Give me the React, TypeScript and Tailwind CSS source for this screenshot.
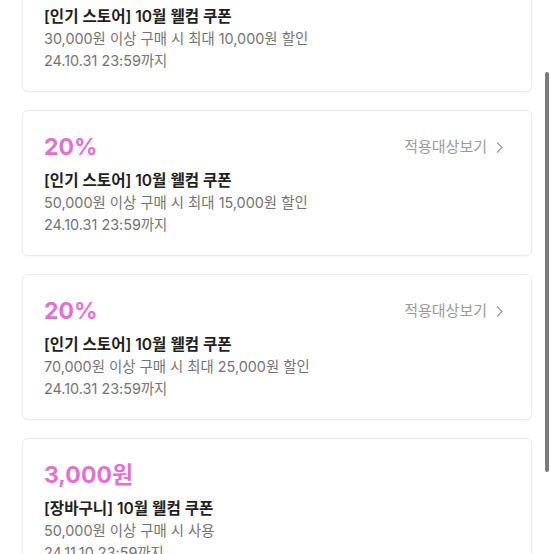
import React from "react";

type Coupon = {
  amount?: string;
  title: string;
  condition: string;
  until: string;
  showTarget?: boolean;
};

const COUPONS: Coupon[] = [
  {
    amount: "20%",
    title: "[인기 스토어] 10월 웰컴 쿠폰",
    condition: "30,000원 이상 구매 시 최대 10,000원 할인",
    until: "24.10.31 23:59까지",
    showTarget: true,
  },
  {
    amount: "20%",
    title: "[인기 스토어] 10월 웰컴 쿠폰",
    condition: "50,000원 이상 구매 시 최대 15,000원 할인",
    until: "24.10.31 23:59까지",
    showTarget: true,
  },
  {
    amount: "20%",
    title: "[인기 스토어] 10월 웰컴 쿠폰",
    condition: "70,000원 이상 구매 시 최대 25,000원 할인",
    until: "24.10.31 23:59까지",
    showTarget: true,
  },
  {
    amount: "3,000원",
    title: "[장바구니] 10월 웰컴 쿠폰",
    condition: "50,000원 이상 구매 시 사용",
    until: "24.11.10 23:59까지",
  },
];

/* ---------------- COUPON CARD ---------------- */

const CouponCard: React.FC<{ coupon: Coupon }> = ({ coupon }) => {
  return (
    <div className="h-[146px] shrink-0 rounded-[6px] border border-[#ebebeb] bg-white px-[21px] pt-[22px] shadow-[0_1px_2px_rgba(0,0,0,0.04)]">
      <div className="flex h-[28px] items-center justify-between">
        <span className="text-[23px] font-bold leading-[28px] text-[#e46fd3]">
          {coupon.amount}
        </span>
        {coupon.showTarget && (
          <span className="mr-[7px] flex items-center gap-[9px] text-[15px] text-[#9a9a9a]">
            적용대상보기
            <svg width="7" height="13" viewBox="0 0 7 13" fill="none">
              <path
                d="M1 1.5 6 6.5 1 11.5"
                stroke="#9a9a9a"
                strokeWidth="1.2"
              />
            </svg>
          </span>
        )}
      </div>
      <div className="mt-[9px] text-[15.6px] font-semibold leading-[22px] text-[#1f1f1f]">
        {coupon.title}
      </div>
      <div className="text-[14.4px] leading-[22px] text-[#747474]">
        {coupon.condition}
      </div>
      <div className="text-[14.4px] leading-[22px] text-[#747474]">
        {coupon.until}
      </div>
    </div>
  );
};

/* ---------------- PAGE ---------------- */

const App: React.FC = () => {
  return (
    <div
      className="relative h-[554px] w-[554px] overflow-hidden bg-white"
      style={{ fontFamily: 'Inter, "Noto Sans CJK KR", sans-serif' }}
    >
      <div className="mt-[-54px] flex flex-col gap-[18px] px-[22px]">
        {COUPONS.map((c, i) => (
          <CouponCard key={i} coupon={c} />
        ))}
      </div>

      {/* scrollbar */}
      <div className="absolute left-[545px] top-[72px] h-[400px] w-[4px] rounded-full bg-[#7b7b7b]" />
    </div>
  );
};

export default App;
